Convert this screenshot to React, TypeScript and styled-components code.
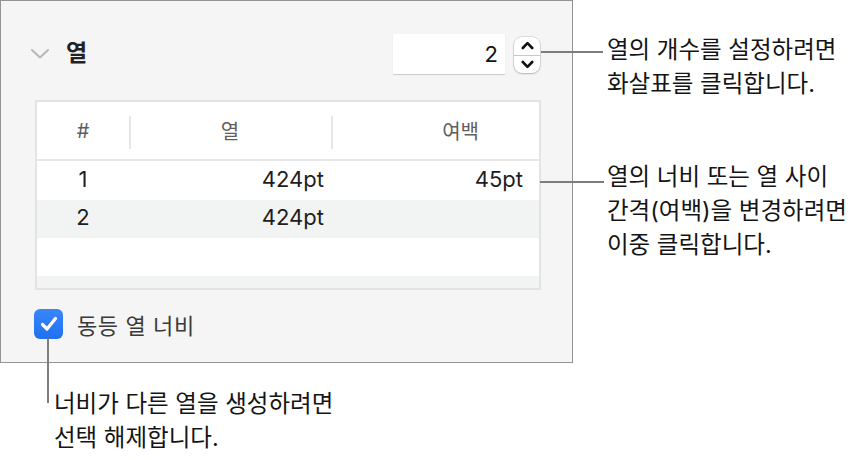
import React from 'react'
import styled, { createGlobalStyle } from 'styled-components'

const GlobalStyle = createGlobalStyle`
  body {
    margin: 0;
    background: #ffffff;
    font-family: Inter, "Noto Sans CJK KR", sans-serif;
    color: #1d1d1d;
  }
`

const Page = styled.div`
  width: 862px;
  height: 460px;
  display: flex;
  flex-direction: column;
  overflow: hidden;
`

const TopRow = styled.div`
  display: flex;
  flex-direction: row;
`

const Panel = styled.div`
  width: 571px;
  height: 361px;
  box-sizing: content-box;
  border: 1px solid #949494;
  background: #f5f5f5;
  display: flex;
  flex-direction: column;
`

const HeaderRow = styled.div`
  display: flex;
  align-items: center;
  height: 41px;
  margin-top: 32px;
  padding-left: 29px;
  padding-right: 32px;
`

const Title = styled.div`
  font-size: 23px;
  font-weight: 700;
  color: #222;
  margin-left: 16px;
  flex: 1;
  line-height: 1;
`

const NumberInput = styled.div`
  width: 112px;
  height: 40px;
  background: #fff;
  box-shadow: 0 1px 1px rgba(0, 0, 0, 0.18);
  border-radius: 1px;
  display: flex;
  align-items: center;
  justify-content: flex-end;
  padding-right: 7px;
  box-sizing: border-box;
  font-size: 22px;
  color: #111;
`

const Stepper = styled.div`
  width: 26px;
  height: 36px;
  margin-left: 9px;
  margin-top: 3px;
  background: #fff;
  border-radius: 8px;
  box-shadow: 0 0 0 0.5px rgba(0, 0, 0, 0.18), 0 1px 2px rgba(0, 0, 0, 0.2);
  display: flex;
  flex-direction: column;
`

const StepHalf = styled.div<{ $top?: boolean }>`
  flex: 1;
  display: flex;
  align-items: center;
  justify-content: center;
  border-bottom: ${p => (p.$top ? '1px solid #c8c8c8' : 'none')};
`

const Table = styled.div`
  margin: 26px 0 0 34px;
  width: 506px;
  height: 190px;
  box-sizing: border-box;
  border: 2px solid #e3e3e3;
  background: #fff;
  overflow: hidden;
`

const TableHead = styled.div`
  display: grid;
  grid-template-columns: 92px 202px 1fr;
  height: 57px;
  border-bottom: 2px solid #e6e6e6;
`

const HeadCell = styled.div<{ $align: string; $pad?: number; $sep?: boolean }>`
  display: flex;
  align-items: center;
  justify-content: ${p => p.$align};
  padding-right: ${p => p.$pad ?? 0}px;
  font-size: 20px;
  color: #5e5e5e;
  position: relative;

  &::before {
    content: '';
    display: ${p => (p.$sep ? 'block' : 'none')};
    position: absolute;
    left: 0;
    top: 14px;
    bottom: 10px;
    width: 2px;
    background: #e6e6e6;
  }
`

const Row = styled.div<{ $shade: boolean; $h: number }>`
  display: grid;
  grid-template-columns: 92px 202px 1fr;
  height: ${p => p.$h}px;
  background: ${p => (p.$shade ? '#f2f3f3' : '#fff')};
  font-size: 22px;
  color: #1e1e1e;
`

const Cell = styled.div<{ $align: string; $pad?: number }>`
  display: flex;
  align-items: center;
  justify-content: ${p => p.$align};
  padding-right: ${p => p.$pad ?? 0}px;
  padding-bottom: 4px;
`

const CheckRow = styled.div`
  display: flex;
  align-items: center;
  margin: 18px 0 0 33px;
  gap: 14px;
`

const CheckBox = styled.div`
  width: 29px;
  height: 30px;
  border-radius: 6px;
  background: linear-gradient(#3a87fa, #1f6ff2);
  display: flex;
  align-items: center;
  justify-content: center;
`

const CheckLabel = styled.div`
  font-size: 22px;
  color: #3a3a3a;
  letter-spacing: 0.6px;
`

const Callouts = styled.div`
  display: flex;
  flex-direction: column;
  padding-left: 34px;
`

const Callout = styled.div<{ $top: number; $lineTop: number; $lineLeft: number; $lineWidth: number }>`
  position: relative;
  margin-top: ${p => p.$top}px;
  font-size: 23.5px;
  line-height: 34px;
  color: #141414;
  white-space: nowrap;

  &::before {
    content: '';
    position: absolute;
    left: ${p => p.$lineLeft}px;
    top: ${p => p.$lineTop}px;
    width: ${p => p.$lineWidth}px;
    height: 2px;
    background: #7d7d7d;
  }
`

const BottomCallout = styled.div`
  position: relative;
  margin-top: 24px;
  padding-left: 54px;
  font-size: 23.5px;
  line-height: 34px;
  color: #141414;

  &::before {
    content: '';
    position: absolute;
    left: 47px;
    top: -49px;
    width: 2px;
    height: 65px;
    background: #7d7d7d;
  }
`

const rows = [
  { n: '1', w: '424pt', g: '45pt', h: 39 },
  { n: '2', w: '424pt', g: '', h: 38 },
  { n: '', w: '', g: '', h: 38 },
  { n: '', w: '', g: '', h: 20 },
]

export default function App() {
  return (
    <Page>
      <GlobalStyle />
      <TopRow>
        <Panel>
          <HeaderRow>
            <svg width="20" height="12" viewBox="0 0 20 12">
              <polyline points="2,2 10,9.5 18,2" fill="none" stroke="#b8b8b8" strokeWidth="2" strokeLinecap="round" strokeLinejoin="round" />
            </svg>
            <Title>열</Title>
            <NumberInput>2</NumberInput>
            <Stepper>
              <StepHalf $top>
                <svg width="13" height="9" viewBox="0 0 13 9">
                  <polyline points="1.8,7 6.5,2.2 11.2,7" fill="none" stroke="#111" strokeWidth="2.6" strokeLinecap="round" strokeLinejoin="round" />
                </svg>
              </StepHalf>
              <StepHalf>
                <svg width="13" height="9" viewBox="0 0 13 9">
                  <polyline points="1.8,2 6.5,6.8 11.2,2" fill="none" stroke="#111" strokeWidth="2.6" strokeLinecap="round" strokeLinejoin="round" />
                </svg>
              </StepHalf>
            </Stepper>
          </HeaderRow>

          <Table>
            <TableHead>
              <HeadCell $align="center">#</HeadCell>
              <HeadCell $align="center" $sep>열</HeadCell>
              <HeadCell $align="flex-end" $pad={60} $sep>여백</HeadCell>
            </TableHead>
            {rows.map((r, i) => (
              <Row key={i} $shade={i % 2 === 1} $h={r.h}>
                <Cell $align="center">{r.n}</Cell>
                <Cell $align="flex-end" $pad={7}>{r.w}</Cell>
                <Cell $align="flex-end" $pad={16}>{r.g}</Cell>
              </Row>
            ))}
          </Table>

          <CheckRow>
            <CheckBox>
              <svg width="20" height="18" viewBox="0 0 20 18">
                <polyline points="3.5,9.5 8,14 16.5,3.5" fill="none" stroke="#fff" strokeWidth="3.2" strokeLinecap="round" strokeLinejoin="round" />
              </svg>
            </CheckBox>
            <CheckLabel>동등 열 너비</CheckLabel>
          </CheckRow>
        </Panel>

        <Callouts>
          <Callout $top={33} $lineTop={18} $lineLeft={-66} $lineWidth={62}>
            열의 개수를 설정하려면
            <br />
            화살표를 클릭합니다.
          </Callout>
          <Callout $top={59} $lineTop={21} $lineLeft={-67} $lineWidth={64}>
            열의 너비 또는 열 사이
            <br />
            간격(여백)을 변경하려면
            <br />
            이중 클릭합니다.
          </Callout>
        </Callouts>
      </TopRow>

      <BottomCallout>
        너비가 다른 열을 생성하려면
        <br />
        선택 해제합니다.
      </BottomCallout>
    </Page>
  )
}
